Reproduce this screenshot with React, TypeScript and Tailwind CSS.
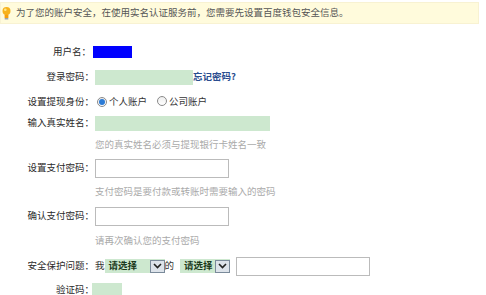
import type { ReactNode } from "react";

const FONT = {
  fontFamily: '"SimSun", "Noto Sans CJK SC", "Liberation Sans", sans-serif',
};

function Bulb() {
  return (
    <svg width="9" height="15" viewBox="0 0 9 15" className="shrink-0">
      <circle cx="4.5" cy="5" r="4" fill="#f7b21c" />
      <circle cx="3.3" cy="3.8" r="1.3" fill="#fde68a" />
      <rect x="2.6" y="8.5" width="3.8" height="3.5" fill="#f59e0b" />
      <rect x="2.6" y="12" width="3.8" height="1.6" rx="0.6" fill="#9ca3af" />
    </svg>
  );
}

function Row({
  label,
  h,
  children,
  labelPad = 0,
}: {
  label?: string;
  h: string;
  children?: ReactNode;
  labelPad?: number;
}) {
  return (
    <div className={`flex items-center ${h}`}>
      <div
        className="w-[94px] shrink-0 text-right text-[#2a2a2a]"
        style={{ paddingRight: labelPad }}
      >
        {label}
      </div>
      <div className="flex items-center pl-[1px]">{children}</div>
    </div>
  );
}

function Radio({ checked }: { checked?: boolean }) {
  return (
    <span className="inline-flex h-[10px] w-[10px] items-center justify-center rounded-full border border-[#8a8a8a] bg-gradient-to-b from-[#eee] to-white">
      {checked && <span className="h-[6px] w-[6px] rounded-full bg-[#2b7bd6]" />}
    </span>
  );
}

function Select({ width }: { width: string }) {
  return (
    <div className={`flex h-[14px] items-center bg-[#cde8cf] ${width}`}>
      <span className="flex-1 pl-[4px] font-bold text-[#1b3a1b]">请选择</span>
      <span className="flex h-[13px] w-[15px] items-center justify-center border border-[#7a8a9a] bg-[#dde3ea]">
        <svg width="9" height="6" viewBox="0 0 9 6">
          <path d="M1 1 L4.5 4.5 L8 1" stroke="#222" strokeWidth="1.6" fill="none" />
        </svg>
      </span>
    </div>
  );
}

export default function App() {
  return (
    <div className="h-[295px] w-[486px] overflow-hidden bg-white text-[9.5px] leading-none" style={FONT}>
      <div className="mt-[2px] flex h-[22px] w-[479px] items-center gap-[5px] border border-[#f8f2d2] bg-[#fffbdc] pl-[1px] text-[#555]">
        <Bulb />
        <span>为了您的账户安全，在使用实名认证服务前，您需要先设置百度钱包安全信息。</span>
      </div>

      <div className="mt-[16px] flex flex-col">
        <Row label="用户名：" h="h-[24px]" labelPad={3}>
          <div className="-ml-[2px] h-[12px] w-[39px] bg-[#0000ff]" />
        </Row>
        <Row label="登录密码：" h="h-[26px]">
          <div className="h-[15px] w-[98px] bg-[#cde8cf]" />
          <a className="font-bold text-[#2a4d8f]">忘记密码?</a>
        </Row>
        <Row label="设置提现身份：" h="h-[24px]">
          <span className="ml-[2px]">
            <Radio checked />
          </span>
          <span className="ml-[2px] text-[#333]">个人账户</span>
          <span className="ml-[10px]">
            <Radio />
          </span>
          <span className="ml-[2px] text-[#333]">公司账户</span>
        </Row>
        <Row label="输入真实姓名：" h="h-[18px]">
          <div className="h-[15px] w-[175px] bg-[#cde8cf]" />
        </Row>
        <Row h="h-[26px]">
          <span className="text-[#aaa]">您的真实姓名必须与提现银行卡姓名一致</span>
        </Row>
        <Row label="设置支付密码：" h="h-[20px]">
          <div className="h-[19px] w-[134px] border border-[#bbb] bg-white" />
        </Row>
        <Row h="h-[28px]">
          <span className="text-[#aaa]">支付密码是要付款或转账时需要输入的密码</span>
        </Row>
        <Row label="确认支付密码：" h="h-[20px]">
          <div className="h-[19px] w-[134px] border border-[#bbb] bg-white" />
        </Row>
        <Row h="h-[30px]">
          <span className="text-[#aaa]">请再次确认您的支付密码</span>
        </Row>
        <Row label="安全保护问题：" h="h-[20px]">
          <span className="text-[#333]">我</span>
          <Select width="w-[60px]" />
          <span className="text-[#333]">的</span>
          <span className="ml-[6px]">
            <Select width="w-[50px]" />
          </span>
          <div className="ml-[6px] h-[19px] w-[134px] border border-[#bbb] bg-white" />
        </Row>
        <Row label="验证码：" h="h-[28px]">
          <div className="-ml-[3px] h-[14px] w-[30px] bg-[#cde8cf]" />
        </Row>
      </div>
    </div>
  );
}
